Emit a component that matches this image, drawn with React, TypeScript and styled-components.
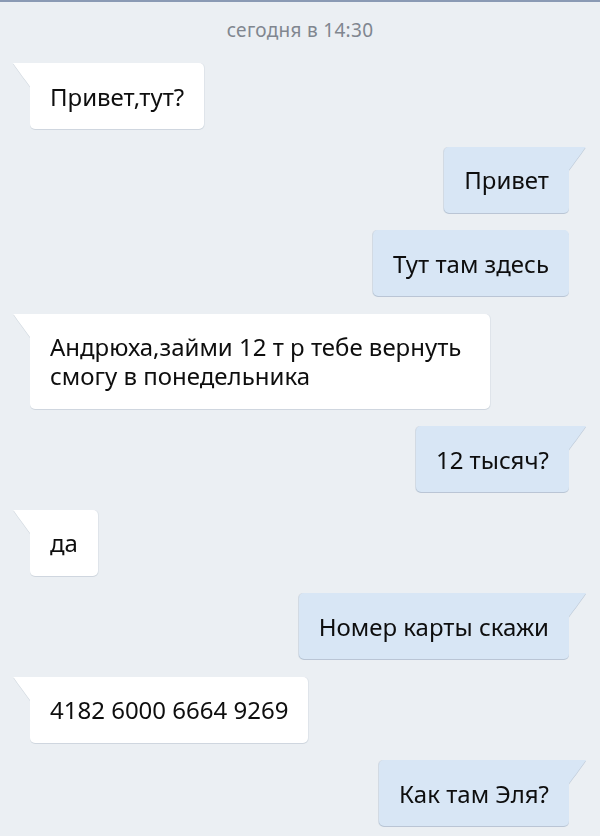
import React from 'react';
import styled, { createGlobalStyle, css } from 'styled-components';

const GlobalStyle = createGlobalStyle`
  html, body {
    margin: 0;
    padding: 0;
    background: #ebeff3;
  }
  body {
    font-family: 'Noto Sans', 'DejaVu Sans', sans-serif;
    -webkit-font-smoothing: antialiased;
  }
`;

type Side = 'in' | 'out';

type Message = {
  id: number;
  side: Side;
  text: string;
  tail: boolean;
};

const messages: Message[] = [
  { id: 1, side: 'in', text: 'Привет,тут?', tail: true },
  { id: 2, side: 'out', text: 'Привет', tail: true },
  { id: 3, side: 'out', text: 'Тут там здесь', tail: false },
  { id: 4, side: 'in', text: 'Андрюха,займи 12 т р тебе вернуть смогу в понедельника', tail: true },
  { id: 5, side: 'out', text: '12 тысяч?', tail: true },
  { id: 6, side: 'in', text: 'да', tail: true },
  { id: 7, side: 'out', text: 'Номер карты скажи', tail: true },
  { id: 8, side: 'in', text: '4182 6000 6664 9269', tail: true },
  { id: 9, side: 'out', text: 'Как там Эля?', tail: true },
];

const Screen = styled.div`
  min-height: 836px;
  background: #ebeff3;
  border-top: 2px solid #8a9ab4;
  box-sizing: border-box;
  overflow: hidden;
`;

const DateLabel = styled.div`
  text-align: center;
  color: #80868f;
  font-size: 19px;
  line-height: 22px;
  padding-top: 17px;
  letter-spacing: 0.3px;
`;

const Feed = styled.div`
  display: flex;
  flex-direction: column;
  gap: 17.5px;
  padding: 22px 31px 0 30px;
`;

const Row = styled.div<{ $side: Side }>`
  display: flex;
  justify-content: ${(p) => (p.$side === 'in' ? 'flex-start' : 'flex-end')};
`;

const tailIn = css`
  &::before {
    content: '';
    position: absolute;
    top: 0;
    left: -17px;
    width: 18px;
    height: 25px;
    background: inherit;
    clip-path: path('M0 0 H18 V25 C14 19 6 9 0 0 Z');
  }
`;

const tailOut = css`
  &::before {
    content: '';
    position: absolute;
    top: 0;
    right: -17px;
    width: 18px;
    height: 25px;
    background: inherit;
    clip-path: path('M18 0 H0 V25 C4 19 12 9 18 0 Z');
  }
`;

const Bubble = styled.div<{ $side: Side; $tail: boolean }>`
  position: relative;
  max-width: 420px;
  padding: 18.5px 20px;
  font-size: 24px;
  line-height: 29px;
  color: #0e0e0e;
  background: ${(p) => (p.$side === 'in' ? '#ffffff' : '#d8e6f5')};
  border-radius: 5px;
  ${(p) =>
    p.$tail &&
    (p.$side === 'in'
      ? css`border-top-left-radius: 0;`
      : css`border-top-right-radius: 0;`)}
  filter: ${(p) =>
    p.$side === 'in'
      ? 'drop-shadow(0 1px 0 rgba(120, 135, 155, 0.22)) drop-shadow(1px 0 0 rgba(120, 135, 155, 0.1))'
      : 'drop-shadow(0 1px 0 rgba(110, 135, 165, 0.35)) drop-shadow(-1px 0 0 rgba(110, 135, 165, 0.2))'};
  ${(p) => p.$tail && (p.$side === 'in' ? tailIn : tailOut)}
`;

export default function App() {
  return (
    <>
      <GlobalStyle />
      <Screen>
        <DateLabel>сегодня в 14:30</DateLabel>
        <Feed>
          {messages.map((m) => (
            <Row key={m.id} $side={m.side}>
              <Bubble $side={m.side} $tail={m.tail}>
                {m.text}
              </Bubble>
            </Row>
          ))}
        </Feed>
      </Screen>
    </>
  );
}
